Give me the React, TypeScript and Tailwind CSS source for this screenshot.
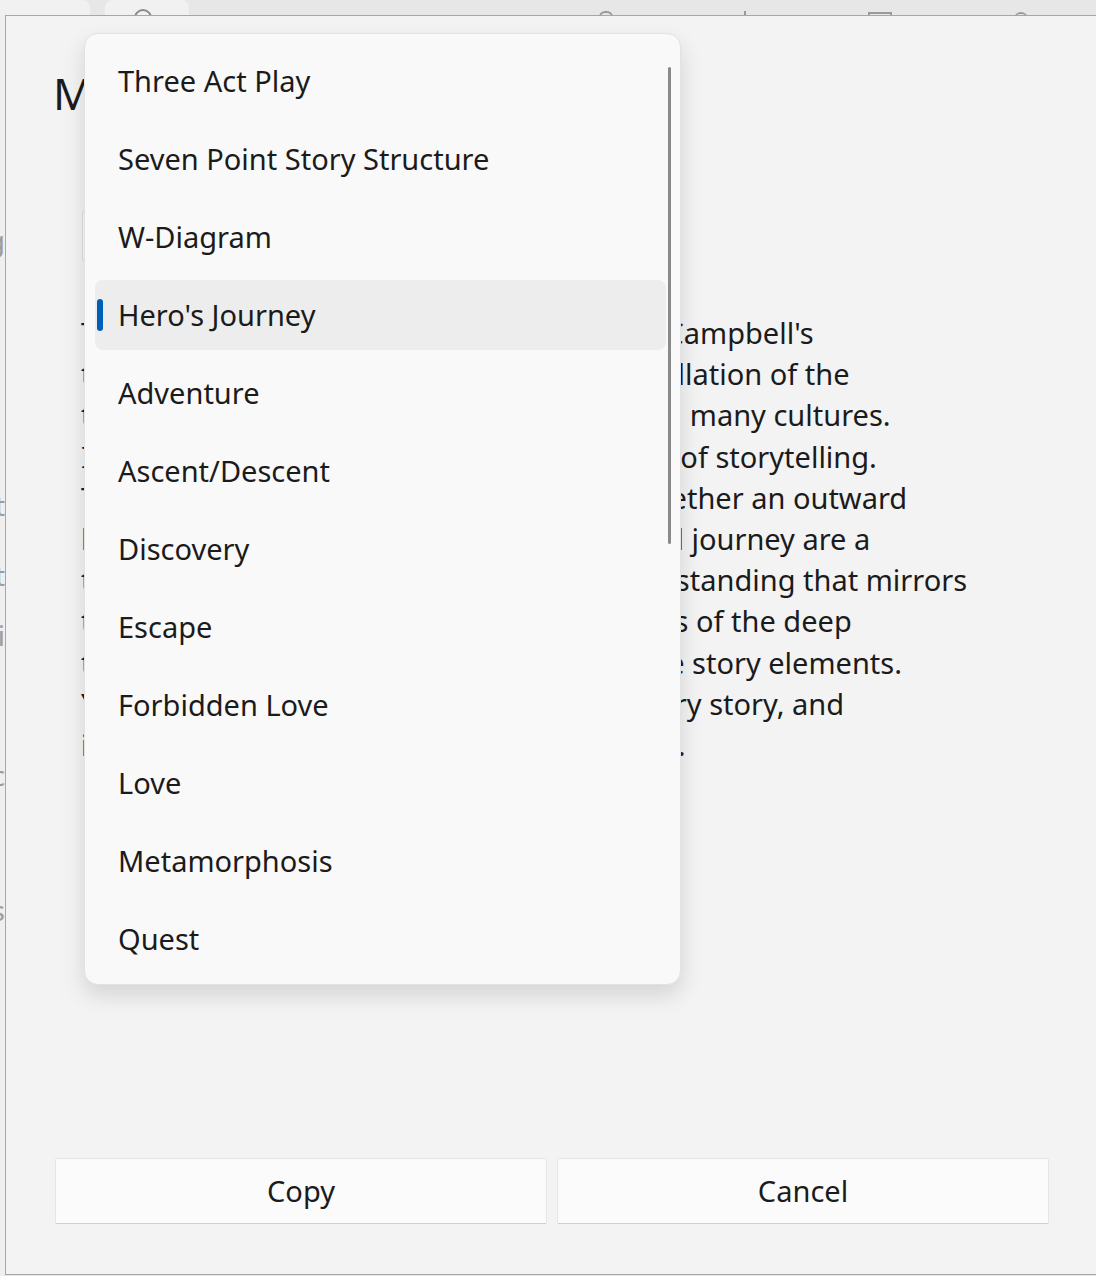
import React from "react";

const plots = [
    "Three Act Play",
    "Seven Point Story Structure",
    "W-Diagram",
    "Hero's Journey",
    "Adventure",
    "Ascent/Descent",
    "Discovery",
    "Escape",
    "Forbidden Love",
    "Love",
    "Metamorphosis",
    "Quest",
];

const description = [
    "The Hero's Journey plot is based on Joseph Campbell's",
    "text The Hero with a Thousand Faces, a distillation of the",
    "the common mythological patterns found in many cultures.",
    "It's one of the best and most popular forms of storytelling.",
    "The twelve stages of the Hero's Journey, whether an outward",
    "heroic adventure or an inward psychological journey are a",
    "the path towards transformation and understanding that mirrors",
    "that of our own lives. Its steps are the stages of the deep",
    "the plot structure, and the hero is one of the story elements.",
    "You can find this same pattern in nearly every story, and",
    "it can be used as a pattern to plan your own.",
];

function TopStrip() {
    return (
        <div className="h-[15px] overflow-hidden flex items-start bg-[#e7e7e7]">
            <div className="w-[90px] h-[15px] bg-[#f1f1f1] rounded-tr-[8px]" />
            <div className="w-[84px] h-[15px] ml-[15px] bg-[#f1f1f1] rounded-t-[8px] flex justify-center pt-[9px]">
                <div className="w-[18px] h-[18px] rounded-full border-2 border-[#8a8a8a] -ml-[8px]" />
            </div>
            <div className="w-[14px] h-[14px] ml-[410px] mt-[11px] rounded-t-[6px] border-2 border-[#9a9a9a]" />
            <div className="w-[2px] h-[6px] ml-[131px] mt-[11px] bg-[#9a9a9a]" />
            <div className="w-[24px] h-[14px] ml-[122px] mt-[12px] border-2 border-[#9a9a9a]" />
            <div className="w-[14px] h-[14px] ml-[122px] mt-[12px] rounded-full border-t-2 border-[#9a9a9a]" />
        </div>
    );
}

function BehindStrip() {
    // scraps of the window behind the dialog, cut off by its left edge
    return (
        <div className="w-[5px] overflow-hidden bg-[#efefef] flex flex-col items-end text-[28px] leading-[40px] text-[#9c9c9c] whitespace-nowrap">
            <span className="mt-[205px]">Using</span>
            <span className="mt-[225px]">Plot</span>
            <span className="mt-[30px]">Plot</span>
            <span className="mt-[20px]">Practi</span>
            <span className="mt-[100px]">Epic</span>
            <span className="mt-[95px]">Tools</span>
        </div>
    );
}

function PlotDropdown() {
    return (
        <div className="absolute left-[84px] top-[33px] w-[597px] pt-[8px] pb-[6px] rounded-[14px] border border-[#e2e2e2] bg-[#f9f9f9] shadow-[0_10px_22px_rgba(0,0,0,0.13)]">
            {plots.map((name) => {
                const selected = name === "Hero's Journey";
                return (
                    <div key={name} className="h-[78px] py-[4px] pl-[10px] pr-[14px]">
                        <div className={`relative h-[70px] rounded-[8px] flex items-center pl-[23px] ${selected ? "bg-[#ededed]" : ""}`}>
                            {selected && (
                                <span className="absolute left-[2px] top-[19px] w-[6px] h-[32px] rounded-full bg-[#005fb8]" />
                            )}
                            <span className="text-[29px] text-[#1b1b1b]">{name}</span>
                        </div>
                    </div>
                );
            })}
            <div className="absolute right-[9px] top-[33px] w-[3px] h-[477px] rounded-full bg-[#8a8a8a]" />
        </div>
    );
}

export default function App() {
    return (
        <div className="relative w-[1096px] h-[1276px] overflow-hidden bg-[#e7e7e7] font-['Noto_Sans','Open_Sans',sans-serif]">
            <TopStrip />
            <div className="flex h-[1261px]">
                <BehindStrip />
                <div className="flex-1 h-[1260px] flex flex-col pl-[49px] bg-[#f3f3f3] border-l border-t border-b border-[#a7a7a7]">
                    <h1 className="mt-[51px] -ml-[2px] text-[44px] leading-[52px] text-[#1b1b1b] whitespace-nowrap">Make a copy of a Master Plot</h1>
                    <div className="mt-[88px] ml-[27px] w-[599px] h-[58px] rounded-[8px] border border-[#e0e0e0] border-b-[#c4c4c4] bg-[#fbfbfb]" />
                    <div className="mt-[47px] ml-[26px] text-[29px] leading-[41.2px] text-[#1b1b1b] whitespace-nowrap">
                        {description.map((line) => (
                            <div key={line}>{line}</div>
                        ))}
                    </div>
                    <div className="flex-1" />
                    <div className="mb-[50px] flex gap-[10px]">
                        <button className="w-[492px] h-[66px] bg-[#fbfbfb] border border-[#e6e6e6] border-b-[#cfcfcf] rounded-[2px] text-[29px] text-[#1b1b1b]">
                            Copy
                        </button>
                        <button className="w-[492px] h-[66px] bg-[#fbfbfb] border border-[#e6e6e6] border-b-[#cfcfcf] rounded-[2px] text-[29px] text-[#1b1b1b]">
                            Cancel
                        </button>
                    </div>
                </div>
            </div>
            <PlotDropdown />
        </div>
    );
}
